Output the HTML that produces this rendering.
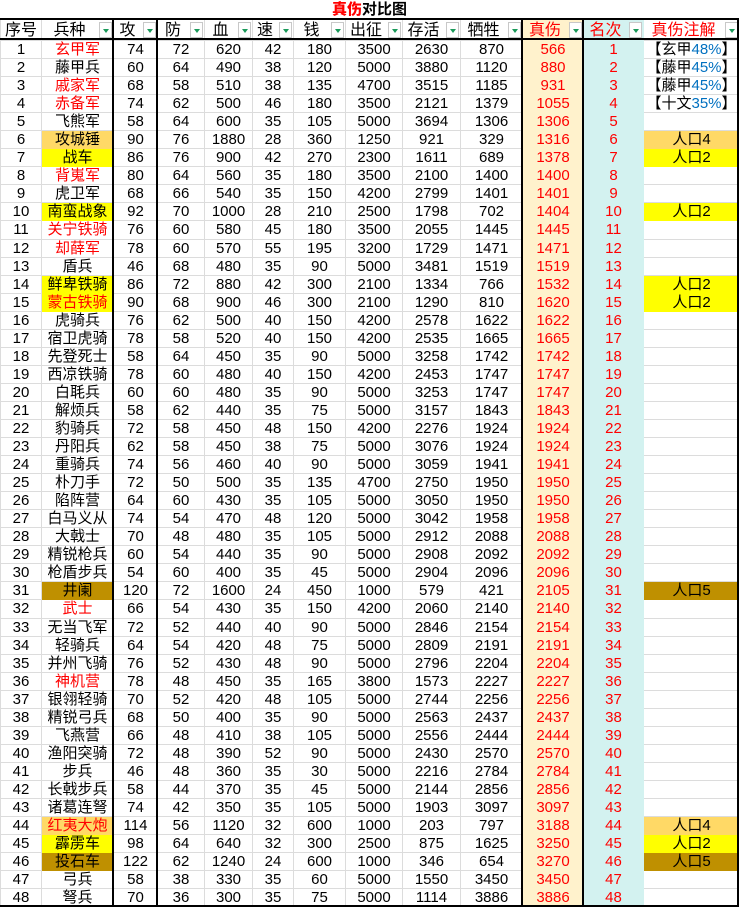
<!DOCTYPE html>
<html><head><meta charset="utf-8">
<style>
*{margin:0;padding:0;box-sizing:border-box}
body{width:739px;height:907px;background:#fff;position:relative;overflow:hidden;font-family:"Liberation Sans","Noto Sans CJK SC",sans-serif;font-size:15px;color:#000}
.title{position:absolute;left:0;top:0;width:739px;height:19px;text-align:center;font-weight:bold;font-size:15px;line-height:19px;border-bottom:1px solid #d9d9d9}
.title b{color:#f00}
table{position:absolute;left:0;top:19px;border-collapse:collapse;table-layout:fixed;width:739px}
td{border:1px solid #dcdcdc;text-align:center;white-space:nowrap;overflow:hidden;line-height:17px;height:18.06px;padding:0}
tr.h td{height:21px;font-size:16px;position:relative;padding-right:16px;text-align:center}
tr.h td:first-child{padding-right:0}
.dd{position:absolute;right:1px;top:2px;width:13px;height:16px;border:1px solid #c8c8c8;background:#fff}
.dd:after{content:"";position:absolute;left:3px;top:6px;border-left:3px solid transparent;border-right:3px solid transparent;border-top:4px solid #1a9a5a}
td.r{color:#f00}
td.s{background:#fff2cc;color:#f00;border-color:#fff2cc}
td.m{background:#d3f2f0;color:#f00;border-color:#d3f2f0}
.o{background:#ffd966;border-color:#ffd966}
.y{background:#ffff00;border-color:#ffff00}
.d{background:#bf9000;border-color:#bf9000}
.bl{color:#0070c0}
.v{position:absolute;background:#000;width:2px;top:18px;height:889px}
.hl{position:absolute;background:#000;height:2px;left:0;width:739px}
</style></head><body>
<div class="title"><b>真伤</b>对比图</div>
<table>
<colgroup><col style="width:41px"><col style="width:72px"><col style="width:44px"><col style="width:47px"><col style="width:48px"><col style="width:41px"><col style="width:52px"><col style="width:57px"><col style="width:58px"><col style="width:62px"><col style="width:61px"><col style="width:60px"><col style="width:96px"></colgroup>
<tr class="h"><td>序号</td><td>兵种<span class="dd"></span></td><td>攻<span class="dd"></span></td><td>防<span class="dd"></span></td><td>血<span class="dd"></span></td><td>速<span class="dd"></span></td><td>钱<span class="dd"></span></td><td>出征<span class="dd"></span></td><td>存活<span class="dd"></span></td><td>牺牲<span class="dd"></span></td><td class="s">真伤<span class="dd"></span></td><td class="m">名次<span class="dd"></span></td><td style="color:#f00">真伤注解<span class="dd"></span></td></tr>
<tr><td>1</td><td class="r">玄甲军</td><td>74</td><td>72</td><td>620</td><td>42</td><td>180</td><td>3500</td><td>2630</td><td>870</td><td class="s">566</td><td class="m">1</td><td>【玄甲<span class="bl">48%</span>】</td></tr>
<tr><td>2</td><td>藤甲兵</td><td>60</td><td>64</td><td>490</td><td>38</td><td>120</td><td>5000</td><td>3880</td><td>1120</td><td class="s">880</td><td class="m">2</td><td>【藤甲<span class="bl">45%</span>】</td></tr>
<tr><td>3</td><td class="r">戚家军</td><td>68</td><td>58</td><td>510</td><td>38</td><td>135</td><td>4700</td><td>3515</td><td>1185</td><td class="s">931</td><td class="m">3</td><td>【藤甲<span class="bl">45%</span>】</td></tr>
<tr><td>4</td><td class="r">赤备军</td><td>74</td><td>62</td><td>500</td><td>46</td><td>180</td><td>3500</td><td>2121</td><td>1379</td><td class="s">1055</td><td class="m">4</td><td>【十文<span class="bl">35%</span>】</td></tr>
<tr><td>5</td><td>飞熊军</td><td>58</td><td>64</td><td>600</td><td>35</td><td>105</td><td>5000</td><td>3694</td><td>1306</td><td class="s">1306</td><td class="m">5</td><td></td></tr>
<tr><td>6</td><td class="o">攻城锤</td><td>90</td><td>76</td><td>1880</td><td>28</td><td>360</td><td>1250</td><td>921</td><td>329</td><td class="s">1316</td><td class="m">6</td><td class="o">人口4</td></tr>
<tr><td>7</td><td class="y">战车</td><td>86</td><td>76</td><td>900</td><td>42</td><td>270</td><td>2300</td><td>1611</td><td>689</td><td class="s">1378</td><td class="m">7</td><td class="y">人口2</td></tr>
<tr><td>8</td><td class="r">背嵬军</td><td>80</td><td>64</td><td>560</td><td>35</td><td>180</td><td>3500</td><td>2100</td><td>1400</td><td class="s">1400</td><td class="m">8</td><td></td></tr>
<tr><td>9</td><td>虎卫军</td><td>68</td><td>66</td><td>540</td><td>35</td><td>150</td><td>4200</td><td>2799</td><td>1401</td><td class="s">1401</td><td class="m">9</td><td></td></tr>
<tr><td>10</td><td class="y">南蛮战象</td><td>92</td><td>70</td><td>1000</td><td>28</td><td>210</td><td>2500</td><td>1798</td><td>702</td><td class="s">1404</td><td class="m">10</td><td class="y">人口2</td></tr>
<tr><td>11</td><td class="r">关宁铁骑</td><td>76</td><td>60</td><td>580</td><td>45</td><td>180</td><td>3500</td><td>2055</td><td>1445</td><td class="s">1445</td><td class="m">11</td><td></td></tr>
<tr><td>12</td><td class="r">却薛军</td><td>78</td><td>60</td><td>570</td><td>55</td><td>195</td><td>3200</td><td>1729</td><td>1471</td><td class="s">1471</td><td class="m">12</td><td></td></tr>
<tr><td>13</td><td>盾兵</td><td>46</td><td>68</td><td>480</td><td>35</td><td>90</td><td>5000</td><td>3481</td><td>1519</td><td class="s">1519</td><td class="m">13</td><td></td></tr>
<tr><td>14</td><td class="y">鲜卑铁骑</td><td>86</td><td>72</td><td>880</td><td>42</td><td>300</td><td>2100</td><td>1334</td><td>766</td><td class="s">1532</td><td class="m">14</td><td class="y">人口2</td></tr>
<tr><td>15</td><td class="y r">蒙古铁骑</td><td>90</td><td>68</td><td>900</td><td>46</td><td>300</td><td>2100</td><td>1290</td><td>810</td><td class="s">1620</td><td class="m">15</td><td class="y">人口2</td></tr>
<tr><td>16</td><td>虎骑兵</td><td>76</td><td>62</td><td>500</td><td>40</td><td>150</td><td>4200</td><td>2578</td><td>1622</td><td class="s">1622</td><td class="m">16</td><td></td></tr>
<tr><td>17</td><td>宿卫虎骑</td><td>78</td><td>58</td><td>520</td><td>40</td><td>150</td><td>4200</td><td>2535</td><td>1665</td><td class="s">1665</td><td class="m">17</td><td></td></tr>
<tr><td>18</td><td>先登死士</td><td>58</td><td>64</td><td>450</td><td>35</td><td>90</td><td>5000</td><td>3258</td><td>1742</td><td class="s">1742</td><td class="m">18</td><td></td></tr>
<tr><td>19</td><td>西凉铁骑</td><td>78</td><td>60</td><td>480</td><td>40</td><td>150</td><td>4200</td><td>2453</td><td>1747</td><td class="s">1747</td><td class="m">19</td><td></td></tr>
<tr><td>20</td><td>白毦兵</td><td>60</td><td>60</td><td>480</td><td>35</td><td>90</td><td>5000</td><td>3253</td><td>1747</td><td class="s">1747</td><td class="m">20</td><td></td></tr>
<tr><td>21</td><td>解烦兵</td><td>58</td><td>62</td><td>440</td><td>35</td><td>75</td><td>5000</td><td>3157</td><td>1843</td><td class="s">1843</td><td class="m">21</td><td></td></tr>
<tr><td>22</td><td>豹骑兵</td><td>72</td><td>58</td><td>450</td><td>48</td><td>150</td><td>4200</td><td>2276</td><td>1924</td><td class="s">1924</td><td class="m">22</td><td></td></tr>
<tr><td>23</td><td>丹阳兵</td><td>62</td><td>58</td><td>450</td><td>38</td><td>75</td><td>5000</td><td>3076</td><td>1924</td><td class="s">1924</td><td class="m">23</td><td></td></tr>
<tr><td>24</td><td>重骑兵</td><td>74</td><td>56</td><td>460</td><td>40</td><td>90</td><td>5000</td><td>3059</td><td>1941</td><td class="s">1941</td><td class="m">24</td><td></td></tr>
<tr><td>25</td><td>朴刀手</td><td>72</td><td>50</td><td>500</td><td>35</td><td>135</td><td>4700</td><td>2750</td><td>1950</td><td class="s">1950</td><td class="m">25</td><td></td></tr>
<tr><td>26</td><td>陷阵营</td><td>64</td><td>60</td><td>430</td><td>35</td><td>105</td><td>5000</td><td>3050</td><td>1950</td><td class="s">1950</td><td class="m">26</td><td></td></tr>
<tr><td>27</td><td>白马义从</td><td>74</td><td>54</td><td>470</td><td>48</td><td>120</td><td>5000</td><td>3042</td><td>1958</td><td class="s">1958</td><td class="m">27</td><td></td></tr>
<tr><td>28</td><td>大戟士</td><td>70</td><td>48</td><td>480</td><td>35</td><td>105</td><td>5000</td><td>2912</td><td>2088</td><td class="s">2088</td><td class="m">28</td><td></td></tr>
<tr><td>29</td><td>精锐枪兵</td><td>60</td><td>54</td><td>440</td><td>35</td><td>90</td><td>5000</td><td>2908</td><td>2092</td><td class="s">2092</td><td class="m">29</td><td></td></tr>
<tr><td>30</td><td>枪盾步兵</td><td>54</td><td>60</td><td>400</td><td>35</td><td>45</td><td>5000</td><td>2904</td><td>2096</td><td class="s">2096</td><td class="m">30</td><td></td></tr>
<tr><td>31</td><td class="d">井阑</td><td>120</td><td>72</td><td>1600</td><td>24</td><td>450</td><td>1000</td><td>579</td><td>421</td><td class="s">2105</td><td class="m">31</td><td class="d">人口5</td></tr>
<tr><td>32</td><td class="r">武士</td><td>66</td><td>54</td><td>430</td><td>35</td><td>150</td><td>4200</td><td>2060</td><td>2140</td><td class="s">2140</td><td class="m">32</td><td></td></tr>
<tr><td>33</td><td>无当飞军</td><td>72</td><td>52</td><td>440</td><td>40</td><td>90</td><td>5000</td><td>2846</td><td>2154</td><td class="s">2154</td><td class="m">33</td><td></td></tr>
<tr><td>34</td><td>轻骑兵</td><td>64</td><td>54</td><td>420</td><td>48</td><td>75</td><td>5000</td><td>2809</td><td>2191</td><td class="s">2191</td><td class="m">34</td><td></td></tr>
<tr><td>35</td><td>并州飞骑</td><td>76</td><td>52</td><td>430</td><td>48</td><td>90</td><td>5000</td><td>2796</td><td>2204</td><td class="s">2204</td><td class="m">35</td><td></td></tr>
<tr><td>36</td><td class="r">神机营</td><td>78</td><td>48</td><td>450</td><td>35</td><td>165</td><td>3800</td><td>1573</td><td>2227</td><td class="s">2227</td><td class="m">36</td><td></td></tr>
<tr><td>37</td><td>银翎轻骑</td><td>70</td><td>52</td><td>420</td><td>48</td><td>105</td><td>5000</td><td>2744</td><td>2256</td><td class="s">2256</td><td class="m">37</td><td></td></tr>
<tr><td>38</td><td>精锐弓兵</td><td>68</td><td>50</td><td>400</td><td>35</td><td>90</td><td>5000</td><td>2563</td><td>2437</td><td class="s">2437</td><td class="m">38</td><td></td></tr>
<tr><td>39</td><td>飞燕营</td><td>66</td><td>48</td><td>410</td><td>38</td><td>105</td><td>5000</td><td>2556</td><td>2444</td><td class="s">2444</td><td class="m">39</td><td></td></tr>
<tr><td>40</td><td>渔阳突骑</td><td>72</td><td>48</td><td>390</td><td>52</td><td>90</td><td>5000</td><td>2430</td><td>2570</td><td class="s">2570</td><td class="m">40</td><td></td></tr>
<tr><td>41</td><td>步兵</td><td>46</td><td>48</td><td>360</td><td>35</td><td>30</td><td>5000</td><td>2216</td><td>2784</td><td class="s">2784</td><td class="m">41</td><td></td></tr>
<tr><td>42</td><td>长戟步兵</td><td>58</td><td>44</td><td>370</td><td>35</td><td>45</td><td>5000</td><td>2144</td><td>2856</td><td class="s">2856</td><td class="m">42</td><td></td></tr>
<tr><td>43</td><td>诸葛连弩</td><td>74</td><td>42</td><td>350</td><td>35</td><td>105</td><td>5000</td><td>1903</td><td>3097</td><td class="s">3097</td><td class="m">43</td><td></td></tr>
<tr><td>44</td><td class="o r">红夷大炮</td><td>114</td><td>56</td><td>1120</td><td>32</td><td>600</td><td>1000</td><td>203</td><td>797</td><td class="s">3188</td><td class="m">44</td><td class="o">人口4</td></tr>
<tr><td>45</td><td class="y">霹雳车</td><td>98</td><td>64</td><td>640</td><td>32</td><td>300</td><td>2500</td><td>875</td><td>1625</td><td class="s">3250</td><td class="m">45</td><td class="y">人口2</td></tr>
<tr><td>46</td><td class="d">投石车</td><td>122</td><td>62</td><td>1240</td><td>24</td><td>600</td><td>1000</td><td>346</td><td>654</td><td class="s">3270</td><td class="m">46</td><td class="d">人口5</td></tr>
<tr><td>47</td><td>弓兵</td><td>58</td><td>38</td><td>330</td><td>35</td><td>60</td><td>5000</td><td>1550</td><td>3450</td><td class="s">3450</td><td class="m">47</td><td></td></tr>
<tr><td>48</td><td>弩兵</td><td>70</td><td>36</td><td>300</td><td>35</td><td>75</td><td>5000</td><td>1114</td><td>3886</td><td class="s">3886</td><td class="m">48</td><td></td></tr>
</table>
<div class="hl" style="top:18px"></div>
<div class="hl" style="top:38px"></div>
<div class="hl" style="top:905px"></div>
<div class="v" style="left:112px"></div>
<div class="v" style="left:156px"></div>
<div class="v" style="left:521px"></div>
<div class="v" style="left:582px"></div>
<div class="v" style="left:737px"></div>
</body></html>
